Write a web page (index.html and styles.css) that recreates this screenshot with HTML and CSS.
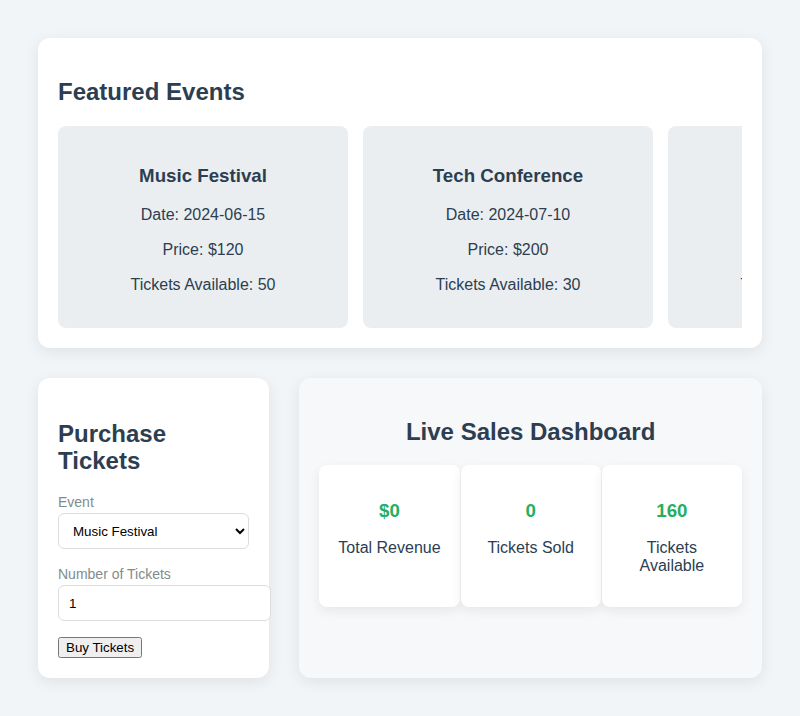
FILE: index.html
```html
<!DOCTYPE html>
<html>
<head>
<meta charset="utf-8">
<link rel="stylesheet" href="styles.css">
</head>
<body>
<div class="container">
  <section class="panel featured">
    <h2>Featured Events</h2>
    <div class="events">
      <div class="event">
        <h3>Music Festival</h3>
        <p>Date: 2024-06-15</p>
        <p>Price: $120</p>
        <p>Tickets Available: 50</p>
      </div>
      <div class="event">
        <h3>Tech Conference</h3>
        <p>Date: 2024-07-10</p>
        <p>Price: $200</p>
        <p>Tickets Available: 30</p>
      </div>
      <div class="event">
        <h3>Art Exhibition</h3>
        <p>Date: 2024-08-05</p>
        <p>Price: $50</p>
        <p>Tickets Available: 80</p>
      </div>
    </div>
  </section>
  <div class="bottom">
    <section class="panel purchase">
      <h2 class="purchase-title">Purchase Tickets</h2>
      <div class="group">
        <label for="ev">Event</label>
        <select id="ev" class="select">
          <option>Music Festival</option>
          <option>Tech Conference</option>
          <option>Art Exhibition</option>
        </select>
      </div>
      <div class="group">
        <label for="num">Number of Tickets</label>
        <input id="num" class="input" type="number" value="1">
      </div>
      <button class="buy">Buy Tickets</button>
    </section>
    <section class="panel dashboard">
      <h2 class="dash-title">Live Sales Dashboard</h2>
      <div class="stats">
        <div class="stat">
          <h3>$0</h3>
          <p>Total Revenue</p>
        </div>
        <div class="stat">
          <h3>0</h3>
          <p>Tickets Sold</p>
        </div>
        <div class="stat">
          <h3>160</h3>
          <p>Tickets Available</p>
        </div>
      </div>
    </section>
  </div>
</div>
</body>
</html>
```

FILE: styles.css
```css
html, body {
  margin: 0;
  padding: 0;
}
body {
  background: #f2f5f8;
  font-family: "Liberation Sans", Arial, sans-serif;
  color: #2c3e50;
}
.container {
  padding: 38px;
}
.panel {
  background: #fff;
  border-radius: 12px;
  padding: 20px;
  box-shadow: 0 4px 15px rgba(0, 0, 0, 0.08);
}
h2 {
  font-size: 24px;
  margin: 20px 0;
  color: #2c3e50;
}
.purchase-title {
  line-height: 27px;
  margin-top: 22px;
}
.dash-title {
  margin-bottom: 19px;
}
.events {
  display: flex;
  gap: 15px;
  overflow: hidden;
}
.event {
  flex: 0 0 290px;
  box-sizing: border-box;
  background: #ebeef0;
  border-radius: 8px;
  padding: 20px;
  text-align: center;
}
.event h3 {
  font-size: 18.72px;
  line-height: 21px;
  margin: 19px 0 19px;
}
.event p {
  font-size: 16px;
  line-height: 19px;
  margin: 16px 0;
}
.event p:last-child {
  margin-bottom: 14px;
}
.bottom {
  display: grid;
  grid-template-columns: 1fr 2fr;
  gap: 30px;
  margin-top: 30px;
}
.group {
  margin-bottom: 17px;
}
.group label {
  display: block;
  font-size: 14px;
  line-height: 16px;
  color: #7f8c8d;
  margin-bottom: 3px;
}
.select {
  width: 100%;
  height: 36px;
  box-sizing: border-box;
  padding: 0 10px;
  border: 1px solid #ddd;
  border-radius: 6px;
  background: #fff;
  font-family: "Liberation Sans", Arial, sans-serif;
  font-size: 13.33px;
  color: #000;
}
.input {
  width: 100%;
  height: 14px;
  padding: 10px;
  border: 1px solid #ddd;
  border-radius: 6px;
  font-family: "Liberation Sans", Arial, sans-serif;
  font-size: 13.33px;
  color: #000;
}
.buy {
  font-family: "Liberation Sans", Arial, sans-serif;
  font-size: 13.33px;
  margin-top: -1px;
}
.dashboard {
  background: #f7f8fa;
  text-align: center;
}
.stats {
  display: grid;
  grid-template-columns: repeat(3, 1fr);
  gap: 1px;
}
.stat {
  background: #fff;
  border-radius: 8px;
  padding: 16px 15px;
  box-shadow: 0 4px 12px rgba(0, 0, 0, 0.07);
}
.stat h3 {
  font-size: 18.72px;
  margin: 18.72px 0 17px;
  color: #27ae60;
}
.stat p {
  font-size: 16px;
  line-height: 18px;
  margin: 16px 0;
}
```
